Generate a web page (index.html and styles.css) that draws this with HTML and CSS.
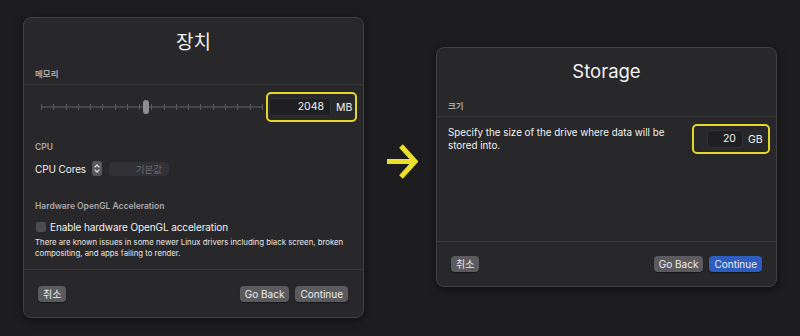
FILE: index.html
```html
<!DOCTYPE html>
<html lang="ko">
<head>
    <meta charset="UTF-8">
    <title>장치 / Storage</title>
    <link rel="stylesheet" href="styles.css">
</head>
<body>

    <!-- Left window: device -->
    <div class="window win-device">
        <div class="title">장치</div>
        <div class="section-label mem-label">메모리</div>
        <div class="divider"></div>

        <div class="mem-row">
            <div class="slider">
                <div class="ticks">
                    <span></span><span></span><span></span><span></span><span></span>
                    <span></span><span></span><span></span><span></span><span></span>
                    <span></span><span></span><span></span><span></span><span></span>
                    <span></span><span></span><span></span><span></span>
                </div>
                <div class="thumb" style="left: 102px;"></div>
            </div>
            <div class="highlight mem-box">
                <div class="field mem-field">2048</div>
                <span class="unit">MB</span>
            </div>
        </div>

        <div class="section-label cpu-label">CPU</div>
        <div class="cpu-row">
            <span class="row-text">CPU Cores</span>
            <span class="stepper">
                <svg width="8" height="13" viewBox="0 0 8 13">
                    <path d="M2 5 L4 3 L6 5" fill="none" stroke="#e0e0e0" stroke-width="1.2" stroke-linecap="round" stroke-linejoin="round"/>
                    <path d="M2 8 L4 10 L6 8" fill="none" stroke="#e0e0e0" stroke-width="1.2" stroke-linecap="round" stroke-linejoin="round"/>
                </svg>
            </span>
            <span class="field cpu-field">기본값</span>
        </div>

        <div class="section-label gl-label">Hardware OpenGL Acceleration</div>
        <div class="check-row">
            <span class="checkbox"></span>
            <span class="row-text">Enable hardware OpenGL acceleration</span>
        </div>
        <p class="note">There are known issues in some newer Linux drivers including black screen, broken compositing, and apps failing to render.</p>

        <div class="divider footer-divider"></div>
        <div class="footer">
            <button class="btn">취소</button>
            <div class="footer-right">
                <button class="btn">Go Back</button>
                <button class="btn">Continue</button>
            </div>
        </div>
    </div>

    <!-- Arrow -->
    <div class="arrow">
        <svg width="32" height="36" viewBox="0 0 32 36">
            <path d="M1 17.5 H27" stroke="#ecdf2a" stroke-width="5"/>
            <path d="M15 2 L29 17.5 L15 33" fill="none" stroke="#ecdf2a" stroke-width="5"/>
        </svg>
    </div>

    <!-- Right window: storage -->
    <div class="window win-storage">
        <div class="title title-storage">Storage</div>
        <div class="section-label size-label">크기</div>
        <div class="divider"></div>

        <div class="size-row">
            <p class="size-text">Specify the size of the drive where data will be stored into.</p>
            <div class="highlight size-box">
                <div class="field size-field">20</div>
                <span class="unit">GB</span>
            </div>
        </div>

        <div class="spacer"></div>
        <div class="divider"></div>
        <div class="footer">
            <button class="btn">취소</button>
            <div class="footer-right">
                <button class="btn">Go Back</button>
                <button class="btn btn-primary">Continue</button>
            </div>
        </div>
    </div>

</body>
</html>
```

FILE: styles.css
```css
* {
    box-sizing: border-box;
}

body {
    margin: 0;
    width: 800px;
    height: 336px;
    background-color: #1d1c1f;
    color: #f2f2f2;
    font-family: Inter, "Noto Sans CJK KR", sans-serif;
    display: flex;
    align-items: flex-start;
    padding: 17px 0 0 23px;
    overflow: hidden;
}

.window {
    background-color: #28272a;
    border: 1px solid #414044;
    border-radius: 8px;
    box-shadow: 0 2px 8px rgba(0, 0, 0, 0.5);
    display: flex;
    flex-direction: column;
}

.win-device {
    width: 341px;
    height: 301px;
}

.win-storage {
    width: 341px;
    height: 240px;
    margin-top: 30px;
}

.title {
    text-align: center;
    font-size: 19px;
    height: 30px;
    margin-top: 8px;
    line-height: 30px;
    font-family: "Noto Sans CJK KR", sans-serif;
}

.title-storage {
    font-family: Inter, sans-serif;
    font-size: 18.5px;
}

.section-label {
    font-size: 8.5px;
    font-weight: 600;
    color: #a9a8ab;
    padding-left: 11px;
    height: 12px;
    line-height: 12px;
    font-family: Inter, "Noto Sans CJK KR", sans-serif;
}

.mem-label {
    margin-top: 12px;
}

.size-label {
    margin-top: 14px;
}

.divider {
    height: 1px;
    background-color: #3b3a3e;
    margin-top: 4px;
}

/* memory row */
.mem-row {
    display: flex;
    align-items: center;
    margin-top: 7px;
    padding-left: 17px;
}

.slider {
    position: relative;
    width: 222px;
    height: 16px;
}

.ticks {
    position: absolute;
    left: 0;
    right: 0;
    top: 7px;
    height: 2px;
    background-color: #454448;
    display: flex;
    justify-content: space-between;
}

.ticks span {
    width: 1px;
    height: 6px;
    margin-top: -2px;
    background-color: #5a595d;
}

.thumb {
    position: absolute;
    top: 1px;
    width: 6px;
    height: 14px;
    border-radius: 3px;
    background-color: #8f8e92;
}

.highlight {
    border: 2px solid #e3d72e;
    border-radius: 5px;
    display: flex;
    align-items: center;
}

.mem-box {
    margin-left: 3px;
    width: 91px;
    height: 30px;
    padding-left: 1px;
}

.field {
    background-color: #1f1e21;
    border: 1px solid #302f33;
    border-radius: 4px;
    font-size: 10.5px;
    text-align: right;
    height: 18px;
    line-height: 16px;
    padding-right: 6px;
}

.mem-field {
    width: 62px;
}

.unit {
    font-size: 10.5px;
    margin-left: 5px;
}

/* cpu row */
.cpu-label {
    margin-top: 19px;
}

.cpu-row {
    display: flex;
    align-items: center;
    padding-left: 11px;
    margin-top: 8px;
    height: 15px;
}

.row-text {
    font-size: 10px;
    letter-spacing: -0.1px;
}

.stepper {
    width: 10px;
    height: 15px;
    border-radius: 3px;
    background-color: #58575b;
    margin-left: 6px;
    display: flex;
    align-items: center;
    justify-content: center;
}

.cpu-field {
    width: 60px;
    height: 14px;
    line-height: 12px;
    margin-left: 7px;
    color: #6e6d71;
    font-size: 9.5px;
    background-color: #323135;
    border-color: #323135;
    font-family: "Noto Sans CJK KR", sans-serif;
}

.gl-label {
    margin-top: 24px;
}

.check-row {
    display: flex;
    align-items: center;
    padding-left: 12px;
    margin-top: 8px;
    height: 13px;
}

.checkbox {
    width: 10px;
    height: 10px;
    border-radius: 2px;
    background-color: #4d4c50;
    margin-right: 4px;
}

.note {
    font-size: 7.8px;
    line-height: 10.5px;
    margin: 4px 0 0;
    padding: 0 8px 0 11px;
    color: #e6e6e6;
}

.footer-divider {
    margin-top: 11px;
}

/* footer */
.footer {
    flex: 1;
    display: flex;
    justify-content: space-between;
    align-items: center;
    padding: 0 15px 0 14px;
}

.win-storage .footer {
    flex: none;
    height: 44px;
    padding-right: 14px;
}

.footer-right {
    display: flex;
    gap: 6px;
}

.btn {
    font-family: Inter, "Noto Sans CJK KR", sans-serif;
    font-size: 10px;
    color: #ececec;
    background-color: #5b5a5e;
    border: none;
    border-radius: 4px;
    height: 16px;
    line-height: 16px;
    padding: 0 5px;
    box-shadow: 0 1px 1px rgba(0, 0, 0, 0.4);
}

.btn-primary {
    background-color: #2e5dc2;
}

/* arrow */
.arrow {
    margin: 127px 18px 0 22px;
    display: flex;
}

/* storage */
.size-row {
    display: flex;
    align-items: center;
    justify-content: space-between;
    padding: 0 6px 0 11px;
    margin-top: 7px;
}

.size-text {
    margin: 0;
    width: 225px;
    font-size: 9.8px;
    line-height: 13px;
}

.size-box {
    width: 78px;
    height: 30px;
    padding-left: 13px;
}

.size-field {
    width: 36px;
}

.spacer {
    flex: 1;
}
```
